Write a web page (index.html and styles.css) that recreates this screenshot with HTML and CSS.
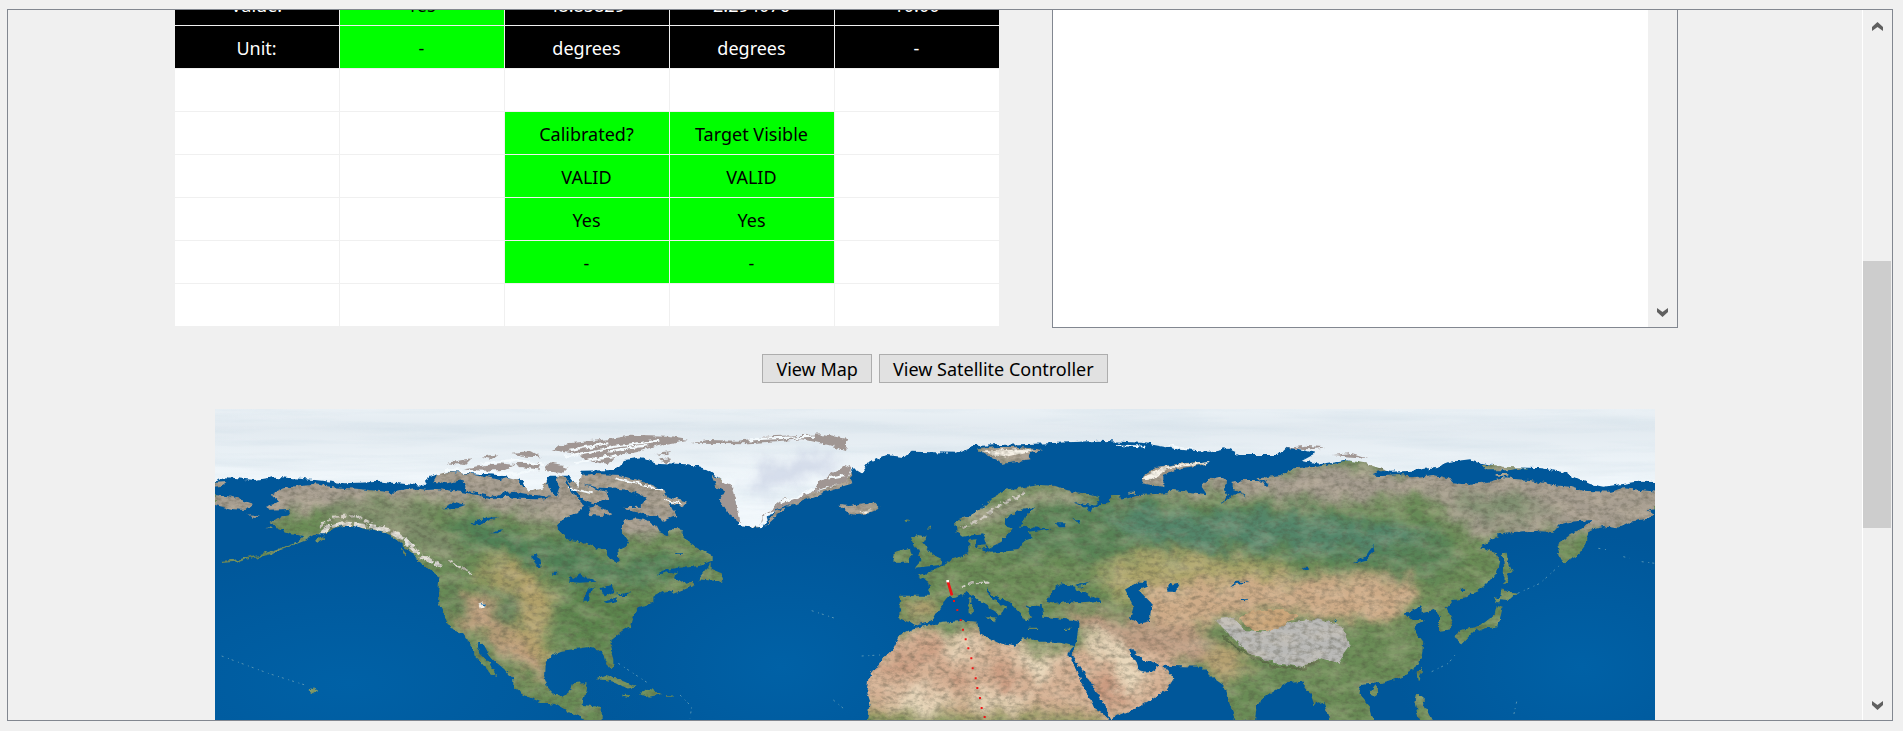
FILE: index.html
```html
<!DOCTYPE html>
<html lang="en">
<head>
<meta charset="utf-8">
<title>Satellite Controller</title>
<link rel="stylesheet" href="styles.css">
</head>
<body>
<main class="frame">
  <div class="content">
    <div class="panels">
      <table class="telemetry">
        <tbody>
          <tr class="dark"><th scope="row">Value:</th><td class="ok">Yes</td><td>48.85829</td><td>2.294076</td><td>10.00</td></tr>
          <tr class="dark"><th scope="row">Unit:</th><td class="ok">-</td><td>degrees</td><td>degrees</td><td>-</td></tr>
          <tr><td></td><td></td><td></td><td></td><td></td></tr>
          <tr><td></td><td></td><td class="ok">Calibrated?</td><td class="ok">Target Visible</td><td></td></tr>
          <tr><td></td><td></td><td class="ok">VALID</td><td class="ok">VALID</td><td></td></tr>
          <tr><td></td><td></td><td class="ok">Yes</td><td class="ok">Yes</td><td></td></tr>
          <tr><td></td><td></td><td class="ok">-</td><td class="ok">-</td><td></td></tr>
          <tr><td></td><td></td><td></td><td></td><td></td></tr>
        </tbody>
      </table>
      <div class="log">
        <textarea class="log-text" aria-label="Log" readonly></textarea>
        <div class="log-bar">
          <button class="arrow" type="button" aria-label="Scroll log down"><svg width="11" height="9" viewBox="0 0 11 9"><path d="M0 0L5.500 4L11 0V4L5.500 9L0 4Z" fill="#606060"/></svg></button>
        </div>
      </div>
    </div>
    <div class="actions">
      <button class="action" type="button">View Map</button>
      <button class="action" type="button">View Satellite Controller</button>
    </div>
    <svg class="map" viewBox="0 27 4320 936" role="img" aria-label="World map with satellite ground track">
      <defs>
        <radialGradient id="sea" cx="50%" cy="50%" r="50%"><stop offset="0" stop-color="#0061a6"/><stop offset="1" stop-color="#0061a6" stop-opacity="0"/></radialGradient>
        <linearGradient id="ice" x1="0" y1="0" x2="0" y2="1"><stop offset="0" stop-color="#eef4f8"/><stop offset=".2" stop-color="#e2eaf0"/><stop offset=".6" stop-color="#f2f8fc"/></linearGradient>
        <filter id="rough" x="0" y="0" width="4320" height="980" filterUnits="userSpaceOnUse">
          <feTurbulence type="fractalNoise" baseFrequency=".05" numOctaves="3" seed="4" result="n"/>
          <feDisplacementMap in="SourceGraphic" in2="n" scale="18" xChannelSelector="R" yChannelSelector="G"/>
        </filter>
        <filter id="soft" x="0" y="0" width="4320" height="980" filterUnits="userSpaceOnUse">
          <feTurbulence type="fractalNoise" baseFrequency=".012" numOctaves="4" seed="8" result="n"/>
          <feGaussianBlur in="SourceGraphic" stdDeviation="20" result="b"/>
          <feDisplacementMap in="b" in2="n" scale="90" xChannelSelector="R" yChannelSelector="G"/>
        </filter>
        <filter id="relief" x="0" y="0" width="4320" height="980" filterUnits="userSpaceOnUse" color-interpolation-filters="sRGB">
          <feTurbulence type="fractalNoise" baseFrequency=".05 .08" numOctaves="4" seed="3"/>
          <feColorMatrix values="0 0 0 0 .3  0 0 0 0 .3  0 0 0 0 .24  1.500 0 0 0 -.6"/>
        </filter>
        <filter id="light" x="0" y="0" width="4320" height="980" filterUnits="userSpaceOnUse" color-interpolation-filters="sRGB">
          <feTurbulence type="fractalNoise" baseFrequency=".012 .025" numOctaves="5" seed="17"/>
          <feColorMatrix values="0 0 0 0 .93  0 0 0 0 .86  0 0 0 0 .76  0 1.600 0 0 -.65"/>
        </filter>
        <filter id="streaks" x="0" y="0" width="4320" height="980" filterUnits="userSpaceOnUse" color-interpolation-filters="sRGB">
          <feTurbulence type="fractalNoise" baseFrequency=".002 .03" numOctaves="4" seed="5"/>
          <feColorMatrix values="0 0 0 0 .8  0 0 0 0 .86  0 0 0 0 .9  2 0 0 0 -.8"/>
        </filter>
        <mask id="land" maskUnits="userSpaceOnUse" x="0" y="0" width="4320" height="980">
          <g filter="url(#rough)" fill="#fff">
            <g transform="translate(-45 0)">
              <path d="M212 285L250 268 300 255 340 252 400 262 470 266 530 272 580 278 640 265 680 270 720 268 780 275 830 285 870 295 920 290 960 296 1010 298 1060 290V760L1035 785 1032 830 1045 865 1062 885 1065 912 1020 905 970 885 940 865 940 840 910 805 880 780 860 755 845 728 830 730 840 760 870 790 888 828 870 820 850 795 825 770 820 745 800 715 790 700 755 690 735 650 715 610 715 570 718 530 690 510 660 490 640 460 610 435 580 410 550 395 500 388 460 378 430 378 400 390 375 400 355 400 320 420 260 443 200 465 120 484 65 489V482L120 478 180 464 230 448 290 425 310 408 270 402 235 388 215 365 240 350 270 345 265 330 210 332 195 320 240 308 230 298Z"/>
              <path d="M45 282L100 292 162 312 140 330 100 328 45 315ZM142 343l38 3-20 5ZM345 422l28-16 2 10-22 12ZM605 440l15 20-6 15ZM325 870l18-8 5 12-10 6ZM45 248l35-2-15 12-20 2ZM195 384l22-2v6Z"/>
              <path d="M700 245L715 215 780 218 840 225 900 240 945 228 970 260 1000 270 1060 220 1100 240 1070 270 1050 290 1000 285 940 275 870 288 800 272 790 240 740 250Z"/>
            </g>
            <g transform="translate(945 0)">
              <path d="M60 290L60 235 100 235 130 280 150 300 165 320 140 340 100 355 80 385 95 400 110 418 150 425 190 440 225 448 235 475 258 487 268 480 265 450 285 440 297 425 280 400 275 390 285 360 310 355 345 360 375 375 385 395 410 405 430 385 445 385 465 410 480 430 510 448 545 465 545 485 520 495 480 502 440 503 400 512 380 525 420 515 440 520 435 535 460 550 490 545 495 555 460 570 425 583 430 570 400 575 370 590 370 605 330 620 315 640 305 660 300 680 270 700 245 720 240 740 250 775 250 800 240 808 225 785 220 760 205 748 170 742 130 748 95 752 60 765Z"/>
              <path d="M40 850L75 885 95 887 120 875 130 852 170 850 165 880 155 915 190 918 215 925 215 965 170 962 120 940 75 912 40 895Z"/>
              <path d="M505 538L525 510 545 490 545 508 575 520 580 545 550 542ZM200 838L230 828 270 838 320 860 290 866 260 848 225 840ZM330 880l30-14 35 16-40 8ZM275 886l22-2v8ZM408 886h20v4h-20Z"/>
              <path d="M135 225L200 222 270 225 340 245 400 270 410 290 470 305 460 325 420 305 440 345 400 362 360 345 290 330 280 322 330 320 350 295 300 270 240 265 200 262 140 250ZM175 320L200 315 245 340 220 348 180 345ZM110 240L180 260 230 275 235 300 190 310 160 300Z"/>
              <path d="M925 315L960 318 1000 310 1040 312 1052 325 1020 340 980 345 950 338ZM545 225L600 250 615 290 620 350 690 385 640 375 600 345 570 300 585 275 555 260ZM860 240L900 210 960 215 970 250 900 270 790 315 740 330 700 385Z"/>
            </g>
            <g transform="translate(1935 0)">
              <path d="M285 365L330 345 370 320 400 290 440 268 490 262 540 255 590 258 620 270 670 280 715 292 718 305 700 315 660 310 640 305 690 330 720 315 750 305 750 285 780 285 785 300 840 285 910 290V800L850 780 820 750 800 745 830 790 840 818 870 820 890 805 900 800V882L830 925 750 955 740 930 700 860 660 800 635 765 645 735 655 700 660 665 640 660 590 655 550 650 545 615 500 620 515 650 495 668 480 640 450 610 400 585 380 560 378 572 410 605 445 625 430 628 420 648 410 635 370 610 345 590 320 575 290 590 265 592 235 630 220 655 200 668 165 678 150 668 118 655 120 587 210 587 205 545 170 525 205 520 240 500 280 475 325 460 325 420 350 418 345 440 395 458 475 450 490 420 430 410 425 425 385 445 370 400 310 410 290 395Z"/>
              <path d="M640 735L600 725 540 725 490 712 465 740 420 730 360 700 355 665 310 662 250 668 160 685 120 705 100 745 60 785 25 835 20 870 30 900 20 970H755L735 945 700 925 680 880 650 810 622 762Z"/>
              <path d="M150 415L175 402 200 410 190 430 215 465 245 480 240 495 165 503 185 480 170 465 180 450 160 440ZM100 485L105 455 150 443 155 470 145 485ZM375 652h35l-5 12ZM325 612h15l-2 28h-12ZM328 595h9v13h-9ZM505 683h30v4h-30ZM612 686h22v4h-22ZM355 435l22-2v12h-18ZM135 358l12 1-5 10ZM205 380h8v6h-8Z"/>
              <path d="M350 148L400 142 470 140 550 150 510 160 515 178 430 188 400 175ZM845 240L890 210 910 215V258L860 252Z"/>
            </g>
            <g transform="translate(2655 0)">
              <path d="M0 310L45 300 30 290 60 285 60 300 120 285 200 280 215 270 240 272 320 283 305 260 330 235 360 228 378 240 375 270 385 285 365 310 400 285 430 280 440 290 435 280 395 270 395 245 430 240 480 240 500 260 510 255 475 235 540 225 580 205 650 200 720 185 760 180 790 185 860 190 870 210 800 225 850 225 905 222V832L845 848 780 855 775 880 810 920 820 965H690L670 905 640 915 625 870 605 845 560 850 520 875 470 910 465 965H407L385 900 370 855 340 835 305 800 190 797 130 775 85 745 0 760Z"/>
              <path d="M85 745L105 790 125 818 165 815 180 785 220 838 200 870 120 910 30 955-10 870V700ZM125 250L135 225 170 200 250 190 330 183 320 192 230 208 185 228 180 250 190 260ZM810 875l20-15 5 20-15 10ZM85 275h20v6h-20Z"/>
            </g>
            <g transform="translate(3465 0)">
              <path d="M-10 222L60 228 130 232 190 225 240 235 250 250 280 253 340 248 400 235 480 240 550 255 610 262 640 272 720 275 760 265 865 275V328L830 330 850 345 840 355 780 365 740 385 700 378 670 385 655 395 650 430 620 470 580 490 570 470 562 435 600 405 640 385 665 360 600 365 570 375 550 395 480 393 400 398 360 420 330 445 380 460 390 475 380 520 340 560 290 595 250 600 230 625 250 665 245 690 210 695 210 655 195 630 155 640 155 618 105 640 125 660 165 660 130 685 160 725 155 770 130 810 85 835 15 850-10 845Z"/>
              <path d="M398 460L410 458 415 495 425 515 412 520 415 550 400 552 402 500ZM395 565L440 582 420 600 390 598 375 610 378 595 390 590ZM380 615L398 620 385 682 345 685 310 695 275 732 250 710 275 690 330 678 360 655 375 640ZM140 815l15-12v20l-12 20ZM0 875l15-20 10 15-10 17-15-2ZM140 885h20l2 30 25 48h-40l-12-50ZM0 915l10 50h-15ZM335 195h65l70 10-60 6h-65ZM380 222h35v8h-35Z"/>
            </g>
          </g>
        </mask>
        <mask id="polar" maskUnits="userSpaceOnUse" x="0" y="0" width="4320" height="980">
          <g filter="url(#rough)" fill="#fff">
            <path d="M-20-20H4350V246L4265 245 4225 252 4165 260 4125 252 4055 220 3985 205 3865 200 3805 190 3765 178 3705 185 3665 200 3595 212 3525 215 3450 190 3390 180 3315 192 3260 180 3300 158 3215 140 3190 165 3075 165 3030 145 2980 155 2900 150 2780 128 2655 122 2500 130 2275 138 2225 158 2090 155 2070 172 2015 165 1965 185 1940 220 1915 205 1890 245 1790 280 1690 315 1640 382 1570 375 1560 300 1540 255 1480 210 1420 193 1320 188 1280 172 1230 180 1200 210 1100 212 1090 262 1065 230 1000 230 985 265 940 275 920 240 850 225 700 215 640 230 632 258 550 250 500 245 390 250 300 240 180 230 120 240 35 232-20 250Z"/>
          </g>
        </mask>
      </defs>
      <rect y="0" width="4320" height="980" fill="#00579a"/>
      <ellipse cx="400" cy="850" rx="900" ry="420" fill="url(#sea)"/>
      <ellipse cx="1700" cy="800" rx="600" ry="400" fill="url(#sea)"/>
      <ellipse cx="4100" cy="800" rx="560" ry="400" fill="url(#sea)"/>
      <g mask="url(#land)">
        <rect width="4320" height="980" fill="#6a8c56"/>
        <g filter="url(#soft)">
          <path fill="#a69d90" d="M-40 150H1500V400L1400 390 1200 410 1080 380 850 330 700 310 500 290 300 320-40 450Z"/>
          <path fill="#a69d90" d="M1480 200H2010V420H1480ZM2270 100H2520V220H2270ZM2740 150H3010V250H2740Z"/>
          <path fill="#7b8c69" d="M350 310L600 310 720 420 720 500 500 400 330 400Z"/>
          <path fill="#4f8156" d="M700 350L1050 430 1180 470 1480 470 1400 540 1100 560 1040 520 760 440Z"/>
          <path fill="#5b854e" d="M1060 560L1360 580 1200 740 1060 740Z"/>
          <path fill="#b3a26b" d="M790 480L940 510 1010 560 1000 650 1000 760 960 800 900 720 880 590Z"/>
          <path fill="#c09e7c" d="M700 560L820 590 860 680 960 760 1000 880 880 780 800 700 740 700Z"/>
          <path fill="#5e8258" d="M840 560h60l30 110h-90ZM690 530h30l30 130-30 10Z"/>
          <path fill="#a6a38d" d="M2220 370L2420 270 2600 255 2650 290 2450 300 2300 400Z"/>
          <path fill="#588457" d="M2380 340L2600 290 3400 340 3650 360 3750 500 3600 540 3300 480 2800 460 2400 480Z"/>
          <path fill="#53866a" d="M2650 330L3250 340 3700 400 3500 450 2800 430Z"/>
          <path fill="#a69d90" d="M2700 200H4400V420L4000 400 3780 410 3650 290 3250 310 3000 270 2700 290Z"/>
          <path fill="#7f9071" d="M3720 280L3900 280 4030 330 3870 370 3750 340Z"/>
          <path fill="#aca56a" d="M2650 490L2900 460 3150 480 3300 560 3100 590 2700 600Z"/>
          <path fill="#cfac88" d="M2780 560L3000 550 3400 530 3580 530 3640 590 3480 680 3300 640 3050 650 2900 700 2800 660Z"/>
          <path fill="#bd9b82" d="M2510 620L2750 650 2980 700 3000 780 2850 810 2680 740Z"/>
          <path fill="#b8a272" d="M2980 730L3060 740 3100 800 3030 850 2970 800ZM2060 600h120l-40 60h-70Z"/>
          <path fill="#d6b194" d="M1900 780L2080 690 2290 690 2500 750 2600 740 2900 770 2900 980H1900Z"/>
          <path fill="#ebdcbf" d="M2200 690L2310 740 2230 765ZM2380 740L2530 770 2480 860ZM2010 890L2160 870 2200 940 2040 930ZM2270 880h160v40h-150ZM2600 700L2680 710 2760 780 2800 860 2720 870 2690 800Z"/>
          <path fill="#c48d73" d="M2000 790l160-50 30 20-160 50ZM2340 820h60v60h-60ZM2190 810h60v40h-60ZM2630 800l60 20 50 90-50 30Z"/>
          <path fill="#949a60" d="M1930 935H2640V980H1930Z"/>
        </g>
        <g filter="url(#rough)">
          <path fill="#babab8" d="M3000 660L3050 650 3090 690 3150 695 3220 670 3310 655 3380 680 3405 740 3370 790 3320 775 3260 800 3180 790 3100 760Z"/>
          <path fill="#cba67a" d="M3070 655L3110 635 3200 630 3250 650 3180 690 3110 690Z"/>
          <path fill="none" stroke="#5f7048" stroke-width="7" d="M3020 710L3100 765 3180 800 3260 805 3310 785"/>
          <path fill="none" stroke="#e4e3df" stroke-width="12" stroke-dasharray="40 5 60 9" d="M315 405L340 380 385 370 450 378 520 390 560 412 590 440 620 470 680 500"/>
          <path fill="none" stroke="#d2d0c8" stroke-width="7" stroke-dasharray="18 6" d="M315 380L360 350 420 345 470 370M700 480L770 520M2238 565L2270 550 2320 548"/>
          <path fill="none" stroke="#d0cdc4" stroke-width="8" stroke-dasharray="22 8" d="M2240 385L2310 350 2360 310 2430 280"/>
          <path fill="#f7f3ea" d="M793 610l15-4 3 14-14 6ZM2780 240L2840 200 2980 183 2990 188 2870 205 2800 240ZM1930 335l30-7 15 5-25 7ZM2300 155l120-8 40 5-80 20Z"/>
        </g>
        <rect width="4320" height="980" filter="url(#relief)" opacity=".6"/>
        <rect width="4320" height="980" filter="url(#light)" opacity=".35"/>
      </g>
      <g filter="url(#rough)" fill="#00589b">
        <path d="M680 325l40-18 30 8-25 10ZM765 372l50-18 35-3-60 22ZM825 400l35-10-8 10ZM950 465l12 30 18 5-15-40-10 8ZM1058 545L1095 520 1145 545 1095 548ZM1105 605L1112 570 1140 560 1125 580 1122 605ZM1155 565L1190 555 1198 575 1170 590ZM1160 605L1210 595 1205 603 1170 610ZM1200 585l45-8-10 8ZM1015 515h12v12h-12ZM800 608l12 8-5 6ZM1380 460h25v5h-25Z"/>
        <path d="M2495 605L2510 570 2540 550 2580 560 2585 575 2610 575 2660 605 2600 610 2560 605 2520 612ZM2580 555L2620 545 2595 560ZM2728 570L2770 545 2795 545 2795 560 2770 570 2800 600 2810 610 2805 660 2770 668 2745 655 2755 620ZM2860 555L2895 548 2880 575 2860 575ZM3042 562L3060 545 3110 546 3065 552ZM3078 595h20v5h-20ZM3410 490L3450 470 3475 437 3478 455 3455 480ZM2525 370h30l-5 12h-15ZM2575 358h18l5 15ZM3740 565h10v8h-10ZM3268 500h10v10h-10ZM3358 660l12 5-8 5Z"/>
        <path d="M2370 380L2370 355 2430 325 2460 322 2430 350 2415 380 2510 385 2440 396 2450 415 2420 425 2410 448 2345 452 2370 415 2390 385Z"/>
        <path d="M990 225h30l15 40-10 30-20-20Z"/>
      </g>
      <g mask="url(#polar)">
        <rect width="4320" height="420" fill="url(#ice)"/>
        <rect width="4320" height="160" filter="url(#streaks)" opacity=".45"/>
        <path fill="#cdd5e6" opacity=".8" filter="url(#soft)" d="M1620 190L1830 160 1900 190 1770 240 1660 260 1640 320 1600 250Z"/>
      </g>
      <g filter="url(#rough)" fill="#a09693">
        <path d="M1010 150L1060 130 1180 118 1240 107 1360 110 1420 120 1330 135 1270 155 1200 170 1180 195 1110 180 1100 165ZM690 190L770 175 750 195ZM750 205L850 190 900 195 870 210 790 212ZM800 170l50-8-20 15ZM890 158l60-4 30 18-50-2ZM900 190l80-4-10 22-50-6ZM1000 190l60 10-20 20-50-8ZM1430 128L1480 120 1570 122 1680 108 1830 103 1900 118 1890 150 1840 135 1760 118 1600 130ZM1320 162l50-6-20 10ZM1330 178l40-3-10 12Z"/>
        <path d="M1495 235L1550 255 1560 300 1575 370 1545 345 1515 300 1530 278ZM1820 240L1890 195 1910 205 1890 248 1830 262 1720 315 1650 340 1635 380 1645 345 1700 300 1790 280ZM3210 145l60-8 60 5-40 6ZM3350 165l60-6 50 15-50-4Z"/>
      </g>
      <g fill="none" stroke="#f4fafd" stroke-width="7" filter="url(#rough)">
        <path d="M1050 170L1200 140 1330 122M1080 190L1210 165M1060 150L1180 130M1180 155L1300 135M690 210L900 222 960 210M800 190L900 180 990 195M1600 118L1800 110M1840 235L1890 225M1700 308L1800 268"/>
        <path d="M1060 262L1130 280M1200 235L1340 270M1350 300L1400 312M2700 135L2790 140M2860 135L2930 150" stroke-width="5"/>
      </g>
      <g fill="none" stroke="#5594b4" stroke-width="3" stroke-dasharray="6 14 3 9">
        <path d="M20 768L160 820 270 855M3650 815L3700 790 3720 765M3908 580L3975 550 4035 495M4150 445L4180 450M4225 470L4245 475M4280 485L4320 490M1210 790L1300 850M1395 885L1430 920 1425 955M1790 632L1860 655M1940 768L1995 765M1855 900L1885 925M3905 905L3895 950"/>
      </g>
      <g fill="#f01414">
        <path d="M2194 543L2202 543 2215 585 2207 587Z"/>
        <path d="M2214 600h6v6h-6ZM2224 627h6v6h-6ZM2234 657h6v6h-6ZM2241 686h6v6h-6ZM2249 715h6v6h-6ZM2257 742h6v6h-6ZM2266 772h6v6h-6ZM2270 802h6v6h-6ZM2279 832h6v6h-6ZM2284 861h6v6h-6ZM2292 891h6v6h-6ZM2297 921h6v6h-6ZM2306 948h6v6h-6Z"/>
        <path fill="#fff" d="M2194 540h8v7h-8Z"/>
      </g>
    </svg>
  </div>
  <div class="scrollbar">
    <button class="arrow arrow-up" type="button" aria-label="Scroll up"><svg width="11" height="9" viewBox="0 0 11 9"><path d="M0 9L5.500 5L11 9V5L5.500 0L0 5Z" fill="#606060"/></svg></button>
    <div class="track"><div class="thumb"></div></div>
    <button class="arrow" type="button" aria-label="Scroll down"><svg width="11" height="9" viewBox="0 0 11 9"><path d="M0 0L5.500 4L11 0V4L5.500 9L0 4Z" fill="#606060"/></svg></button>
  </div>
</main>
</body>
</html>
```

FILE: styles.css
```css
* { box-sizing: border-box; }

body {
  margin: 0;
  height: 100vh;
  padding: 9px 10px 10px 7px;
  background: #f0f0f0;
  color: #000;
  font: 18px/24px "Noto Sans", Tahoma, sans-serif;
}

.frame {
  display: flex;
  height: 100%;
  overflow: hidden;
  border: 1px solid #828790;
}

.content {
  flex: 1;
  min-width: 0;
  display: flex;
  flex-direction: column;
  align-items: center;
  gap: 26px;
  margin-top: -27px;
}

.panels {
  display: flex;
  align-self: stretch;
  justify-content: center;
  gap: 52px;
  padding-right: 18px;
}

.telemetry {
  flex: 0 1 825px;
  width: 825px;
  table-layout: fixed;
  border-collapse: separate;
  border-spacing: 0;
  align-self: flex-start;
}

.telemetry td,
.telemetry th {
  height: 43px;
  padding: 2px 0 0;
  background: #fff;
  border-right: 1px solid #f0f0f0;
  border-bottom: 1px solid #f0f0f0;
  font-weight: 400;
  text-align: center;
}

.telemetry .dark > * {
  background: #000;
  color: #fff;
}

.telemetry .dark > .ok,
.telemetry .ok {
  background: #0f0;
  color: #000;
}

.log {
  display: flex;
  flex: 0 1 626px;
  min-height: 345px;
  border: 1px solid #828790;
  background: #fff;
}

.log-text {
  flex: 1;
  min-width: 0;
  border: 0;
  padding: 4px;
  resize: none;
  outline: 0;
  background: #fff;
  font: inherit;
}

.log-bar {
  display: flex;
  flex-direction: column;
  justify-content: flex-end;
  width: 29px;
  background: #f0f0f0;
}

.arrow {
  display: flex;
  align-items: center;
  justify-content: center;
  width: 100%;
  height: 29px;
  padding: 0;
  border: 0;
  background: none;
}

.arrow-up { height: 33px; }

.actions {
  display: flex;
  gap: 7px;
}

.action {
  height: 29px;
  padding: 0 13px;
  border: 1px solid #adadad;
  background: #e1e1e1;
  color: #000;
  font: inherit;
}

.map {
  display: block;
  flex: none;
  width: 1440px;
  max-width: 100%;
}

.scrollbar {
  display: flex;
  flex-direction: column;
  width: 30px;
  border-left: 1px solid #fff;
}

.track {
  flex: 1;
  display: flex;
  flex-direction: column;
  padding-top: 218px;
}

.thumb {
  height: 41%;
  min-height: 267px;
  margin-right: 1px;
  background: #cdcdcd;
}
```
